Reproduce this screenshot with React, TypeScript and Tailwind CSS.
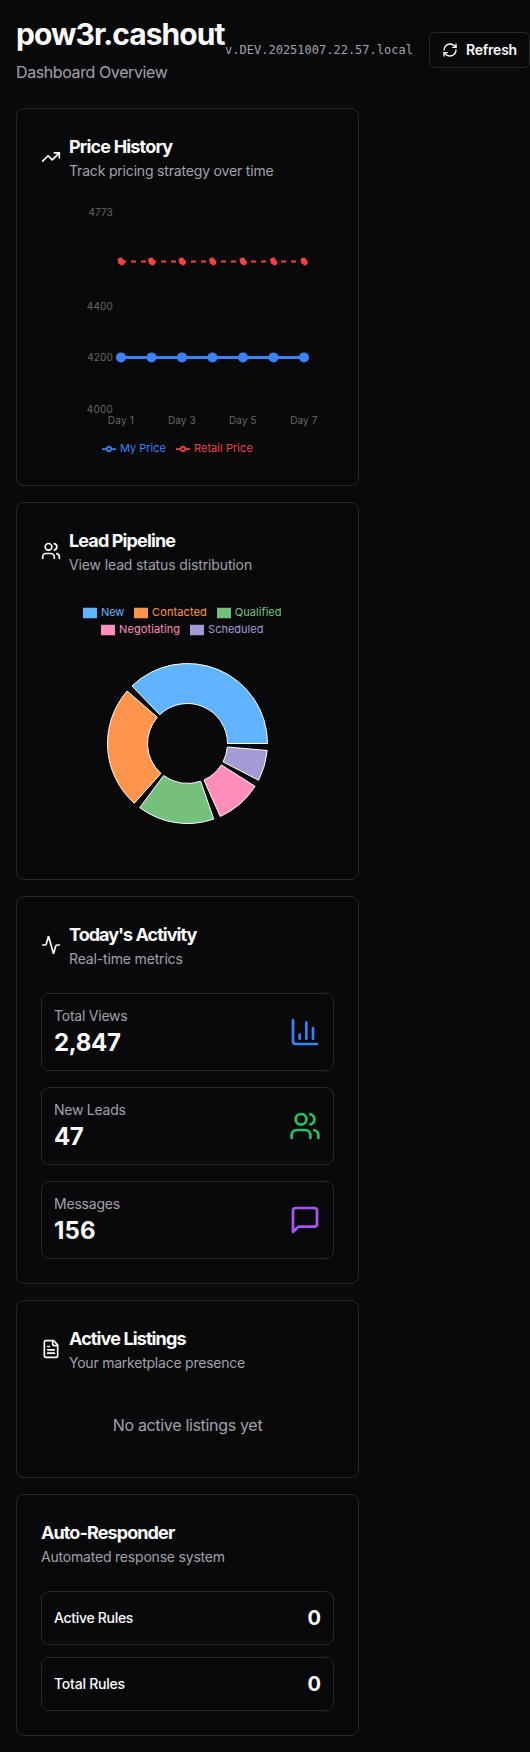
import type { ReactNode } from "react";
import { Activity, ChartColumn, RefreshCw, TrendingUp } from "lucide-react";

function UsersIcon({ className }: { className: string }) {
  return (
    <svg viewBox="0 0 24 24" fill="none" stroke="currentColor" strokeWidth="2" strokeLinecap="round" strokeLinejoin="round" className={className}>
      <path d="M16 21v-2a4 4 0 0 0-4-4H6a4 4 0 0 0-4 4v2" />
      <circle cx="9" cy="7" r="4" />
      <path d="M22 21v-2a4 4 0 0 0-3-3.87" />
      <path d="M16 3.13a4 4 0 0 1 0 7.75" />
    </svg>
  );
}

function FileIcon({ className }: { className: string }) {
  return (
    <svg viewBox="0 0 24 24" fill="none" stroke="currentColor" strokeWidth="2" strokeLinecap="round" strokeLinejoin="round" className={className}>
      <path d="M15 2H6a2 2 0 0 0-2 2v16a2 2 0 0 0 2 2h12a2 2 0 0 0 2-2V7Z" />
      <path d="M14 2v4a2 2 0 0 0 2 2h4" />
      <path d="M10 9H8" />
      <path d="M16 13H8" />
      <path d="M16 17H8" />
    </svg>
  );
}

function MessageIcon({ className }: { className: string }) {
  return (
    <svg viewBox="0 0 24 24" fill="none" stroke="currentColor" strokeWidth="2" strokeLinecap="round" strokeLinejoin="round" className={className}>
      <path d="M21 15a2 2 0 0 1-2 2H7l-4 4V5a2 2 0 0 1 2-2h14a2 2 0 0 1 2 2z" />
    </svg>
  );
}

type CardProps = {
  icon?: ReactNode;
  title: string;
  titleClass: string;
  subtitle: string;
  subtitleClass: string;
  children: ReactNode;
};

function Card({ icon, title, titleClass, subtitle, subtitleClass, children }: CardProps) {
  return (
    <section className="flex flex-col gap-6 rounded-lg border border-[#27272a] p-6">
      <div className="flex items-center gap-2">
        {icon}
        <div>
          <h2 className={`text-lg leading-7 font-bold whitespace-nowrap ${titleClass}`}>{title}</h2>
          <p className={`text-sm whitespace-nowrap text-[#a1a1aa] ${subtitleClass}`}>{subtitle}</p>
        </div>
      </div>
      {children}
    </section>
  );
}

const dayX = [0, 1, 2, 3, 4, 5, 6].map((i) => 80 + i * 30.5);

const yTicks = [
  { label: "4773", y: 11, w: 24.3 },
  { label: "4400", y: 105, w: 26 },
  { label: "4200", y: 155.8, w: 25.6 },
  { label: "4000", y: 208, w: 26 },
];

const xTicks = [
  { label: "Day 1", x: 79.8, w: 26.2 },
  { label: "Day 3", x: 140.8, w: 27.6 },
  { label: "Day 5", x: 201.8, w: 27.6 },
  { label: "Day 7", x: 262.8, w: 27.2 },
];

function LineLegend({ label, className }: { label: string; className: string }) {
  return (
    <li className={`flex items-center gap-1 ${className}`}>
      <svg viewBox="0 0 32 32" className="size-3.5" fill="none" stroke="currentColor" strokeWidth="4">
        <path d="M0,16h10.67A5.33,5.33,0,1,1,21.33,16H32M21.33,16A5.33,5.33,0,1,1,10.67,16" />
      </svg>
      {label}
    </li>
  );
}

function PriceChart() {
  return (
    <div className="h-64">
      <svg width="293" height="235" viewBox="0 0 293 235" className="block">
        <g fill="#666666" fontSize="10">
          {yTicks.map((t) => (
            <text key={t.label} x={71.8 - t.w} y={t.y} textLength={t.w}>{t.label}</text>
          ))}
          {xTicks.map((t) => (
            <text key={t.label} x={t.x - t.w / 2} y="219" textLength={t.w}>{t.label}</text>
          ))}
        </g>
        <g stroke="#3b82f6" fill="#3b82f6">
          <path d={`M${dayX[0]},152.4H${dayX[6]}`} strokeWidth="3" />
          {dayX.map((x) => (
            <circle key={x} cx={x} cy="152.4" r="5" stroke="none" />
          ))}
        </g>
        <g stroke="#ef4444" fill="#ef4444" strokeWidth="2" strokeDasharray="5 5">
          <path d={`M${dayX[0]},56.4H${dayX[6]}`} />
          {dayX.map((x) => (
            <circle key={x} cx={x} cy="56.4" r="3" />
          ))}
        </g>
      </svg>
      <ul className="flex h-[17px] items-center gap-2.5 pl-[61px] text-[11px] leading-[17px] whitespace-nowrap">
        <LineLegend label="My Price" className="text-[#3b82f6]" />
        <LineLegend label="Retail Price" className="tracking-[0.05px] text-[#ef4444]" />
      </ul>
    </div>
  );
}

const slices = [
  { value: 12, color: "#60b4ff" },
  { value: 8, color: "#ff944d" },
  { value: 5, color: "#75c17b" },
  { value: 3, color: "#ff8fba" },
  { value: 2, color: "#a29bd4" },
];

function polar(r: number, deg: number) {
  const a = (deg * Math.PI) / 180;
  return `${(146.5 + r * Math.cos(a)).toFixed(2)},${(105.5 - r * Math.sin(a)).toFixed(2)}`;
}

function slicePath(start: number, end: number) {
  const large = end - start > 180 ? 1 : 0;
  return `M${polar(80, start)}A80,80,0,${large},0,${polar(80, end)}L${polar(40, end)}A40,40,0,${large},1,${polar(40, start)}Z`;
}

const gap = 5;
const total = slices.reduce((sum, s) => sum + s.value, 0);
let cursor = 0;
const arcs = slices.map((s) => {
  const start = cursor;
  const end = start + (s.value / total) * (360 - gap * slices.length);
  cursor = end + gap;
  return { color: s.color, d: slicePath(start, end) };
});

function SwatchLegend({ label, className }: { label: string; className: string }) {
  return (
    <li className={`flex items-center gap-1 ${className}`}>
      <svg viewBox="0 0 32 32" className="size-3.5" fill="currentColor">
        <path d="M0,4h32v24h-32z" />
      </svg>
      {label}
    </li>
  );
}

function PipelineChart() {
  return (
    <div className="h-64 pt-[5px]">
      <ul className="flex h-[17px] items-center gap-2.5 pl-[42px] text-[11px] leading-[17px] whitespace-nowrap">
        <SwatchLegend label="New" className="tracking-[-0.15px] text-[#60b4ff]" />
        <SwatchLegend label="Contacted" className="tracking-[0.1px] text-[#ff944d]" />
        <SwatchLegend label="Qualified" className="tracking-[0.05px] text-[#75c17b]" />
      </ul>
      <ul className="flex h-[17px] items-center gap-2.5 pl-[60px] text-[11px] leading-[17px] whitespace-nowrap">
        <SwatchLegend label="Negotiating" className="tracking-[0.1px] text-[#ff8fba]" />
        <SwatchLegend label="Scheduled" className="text-[#a29bd4]" />
      </ul>
      <svg width="293" height="217" viewBox="0 0 293 217" className="block" stroke="#ffffff">
        {arcs.map((a) => (
          <path key={a.color} d={a.d} fill={a.color} />
        ))}
      </svg>
    </div>
  );
}

function Stat({ label, labelClass, value, valueClass, icon }: { label: string; labelClass: string; value: string; valueClass: string; icon: ReactNode }) {
  return (
    <div className="flex h-[78px] items-center justify-between rounded-lg border border-[#27272a] px-3">
      <div className="pt-px">
        <p className={`text-sm leading-5 text-[#a1a1aa] ${labelClass}`}>{label}</p>
        <p className={`pt-px text-2xl leading-8 font-bold ${valueClass}`}>{value}</p>
      </div>
      {icon}
    </div>
  );
}

function Rule({ label, className }: { label: string; className: string }) {
  return (
    <div className="flex items-center justify-between rounded-lg border border-[#27272a] p-3">
      <span className={`text-sm font-medium ${className}`}>{label}</span>
      <span className="text-xl font-bold">0</span>
    </div>
  );
}

export default function App() {
  return (
    <main className="min-h-[1752px] w-[530px] overflow-hidden bg-[#09090b] pt-4 pb-4 pl-4 font-['Inter',sans-serif] text-[#fafafa] antialiased">
      <header className="flex items-center justify-between">
        <div>
          <h1 className="text-3xl leading-9 font-bold tracking-[-0.97px]">pow3r.cashout</h1>
          <p className="mt-2 text-base tracking-[-0.4px] text-[#a1a1aa]">Dashboard Overview</p>
        </div>
        <div className="flex items-center gap-4">
          <span className="font-['DejaVu_Sans_Mono',monospace] text-xs whitespace-nowrap text-[#a1a1aa]">v.DEV.20251007.22.57.local</span>
          <button className="flex h-9 items-center gap-2 rounded-md border border-[#27272a] px-3 text-sm font-semibold tracking-[-0.2px]">
            <RefreshCw className="size-4" />
            Refresh
          </button>
        </div>
      </header>

      <div className="mt-6 flex w-[343px] flex-col gap-4">
        <Card
          icon={<TrendingUp className="size-5" />}
          title="Price History"
          titleClass="tracking-[-0.82px]"
          subtitle="Track pricing strategy over time"
          subtitleClass="tracking-[-0.18px]"
        >
          <PriceChart />
        </Card>

        <Card
          icon={<UsersIcon className="size-5" />}
          title="Lead Pipeline"
          titleClass="tracking-[-0.87px]"
          subtitle="View lead status distribution"
          subtitleClass="tracking-[-0.13px]"
        >
          <PipelineChart />
        </Card>

        <Card
          icon={<Activity className="size-5" />}
          title="Today's Activity"
          titleClass="tracking-[-0.97px]"
          subtitle="Real-time metrics"
          subtitleClass="tracking-[-0.16px]"
        >
          <div className="flex flex-col gap-4">
            <Stat label="Total Views" labelClass="tracking-[-0.23px]" value="2,847" valueClass="tracking-[-0.35px]" icon={<ChartColumn className="size-8 text-[#3b82f6]" />} />
            <Stat label="New Leads" labelClass="tracking-[-0.25px]" value="47" valueClass="tracking-[-0.5px]" icon={<UsersIcon className="size-8 text-[#22c55e]" />} />
            <Stat label="Messages" labelClass="tracking-[-0.2px]" value="156" valueClass="tracking-[0.2px]" icon={<MessageIcon className="size-8 text-[#a855f7]" />} />
          </div>
        </Card>

        <Card
          icon={<FileIcon className="size-5" />}
          title="Active Listings"
          titleClass="tracking-[-0.88px]"
          subtitle="Your marketplace presence"
          subtitleClass="tracking-[-0.23px]"
        >
          <p className="py-4 text-center text-base tracking-[-0.32px] text-[#a1a1aa]">No active listings yet</p>
        </Card>

        <Card
          title="Auto-Responder"
          titleClass="tracking-[-0.9px]"
          subtitle="Automated response system"
          subtitleClass="tracking-[-0.2px]"
        >
          <div className="flex flex-col gap-3">
            <Rule label="Active Rules" className="tracking-[-0.3px]" />
            <Rule label="Total Rules" className="tracking-[-0.22px]" />
          </div>
        </Card>
      </div>
    </main>
  );
}
